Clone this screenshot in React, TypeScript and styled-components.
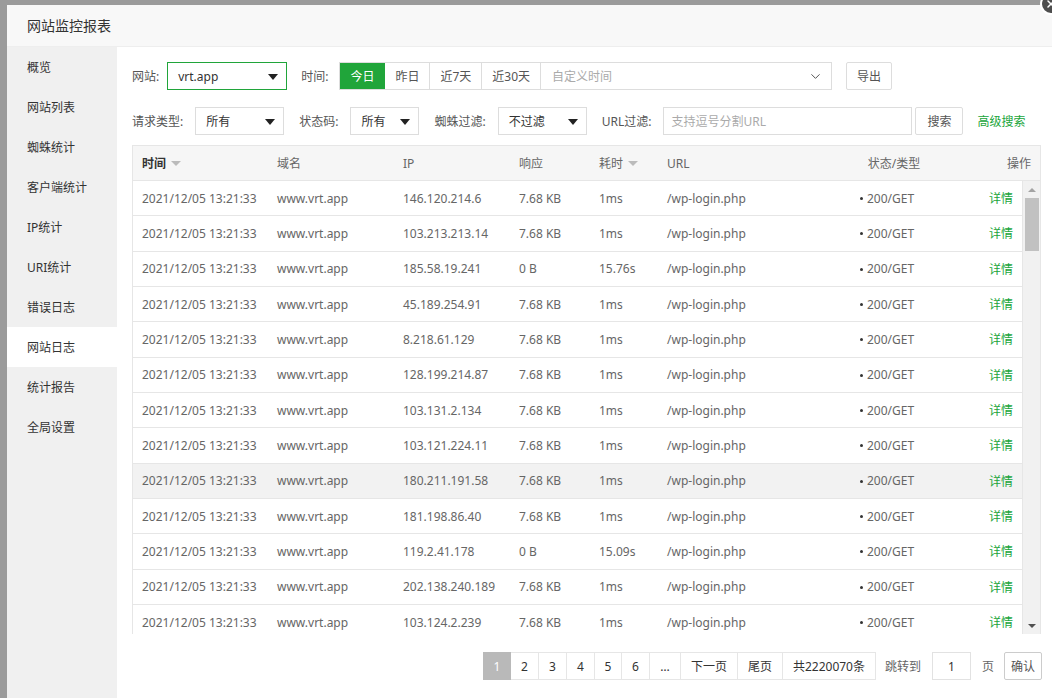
import React from 'react';
import styled, { createGlobalStyle, css } from 'styled-components';
import { ChevronDown, X } from 'lucide-react';

const GlobalStyle = createGlobalStyle`
  * { box-sizing: border-box; }
  html, body { margin: 0; padding: 0; overflow: hidden; background: #9b9b9b; }
  body {
    font-family: "Noto Sans", "Noto Sans CJK SC", sans-serif;
    font-size: 12px;
    color: #666;
  }
`;

const GREEN = '#20a53a';

const Backdrop = styled.div`
  width: 1052px;
  height: 698px;
  padding: 5px 0 0 7px;
  background: #9b9b9b;
  overflow: hidden;
`;

const Modal = styled.div`
  position: relative;
  width: 1049px;
  height: 700px;
  background: #fff;
  display: flex;
  flex-direction: column;
`;

const CloseBtn = styled.div`
  position: absolute;
  top: -12px;
  right: -6px;
  width: 22px;
  height: 22px;
  border-radius: 50%;
  background: #4d4d4d;
  border: 2px solid #fff;
  display: flex;
  align-items: center;
  justify-content: center;
`;

const TitleBar = styled.div`
  height: 42px;
  line-height: 41px;
  padding-left: 20px;
  background: #f8f8f8;
  border-bottom: 1px solid #eee;
  color: #333;
  font-size: 14px;
  flex: none;
`;

const Body = styled.div`
  flex: 1;
  display: flex;
  min-height: 0;
`;

const Sidebar = styled.div`
  width: 110px;
  flex: none;
  background: #f0f0f0;
`;

const NavItem = styled.div<{ $active?: boolean }>`
  height: 40px;
  line-height: 41px;
  padding-left: 20px;
  color: #333;
  font-size: 12px;
  background: ${(p) => (p.$active ? '#fff' : 'transparent')};
`;

const Main = styled.div`
  flex: 1;
  padding: 15px 15px 0 15px;
  display: flex;
  flex-direction: column;
`;

const FilterRow = styled.div<{ $top?: number }>`
  display: flex;
  align-items: center;
  height: 28px;
  margin-top: ${(p) => p.$top ?? 0}px;
`;

const Label = styled.span<{ $gap?: number; $lead?: number }>`
  color: #555;
  margin-left: ${(p) => p.$lead ?? 0}px;
  margin-right: ${(p) => p.$gap ?? 12}px;
  white-space: nowrap;
`;

const SelectBox = styled.div<{ $w: number; $active?: boolean }>`
  position: relative;
  width: ${(p) => p.$w}px;
  height: 28px;
  border: 1px solid ${(p) => (p.$active ? GREEN : '#ddd')};
  padding-left: 10px;
  display: flex;
  align-items: center;
  color: #333;
  font-size: 12px;
  flex: none;
  &::after {
    content: '';
    position: absolute;
    right: 8px;
    top: 11px;
    border-left: 5px solid transparent;
    border-right: 5px solid transparent;
    border-top: 6px solid #222;
  }
`;

const BtnGroup = styled.div`
  display: flex;
  height: 28px;
  border: 1px solid #ddd;
`;

const GroupBtn = styled.div<{ $active?: boolean }>`
  padding: 0 10px;
  display: flex;
  align-items: center;
  border-right: 1px solid #ddd;
  color: #555;
  ${(p) =>
    p.$active &&
    css`
      background: ${GREEN};
      color: #fff;
      border-right-color: ${GREEN};
    `}
`;

const DateInput = styled.div`
  width: 290px;
  display: flex;
  align-items: center;
  justify-content: space-between;
  padding: 0 8px 0 11px;
  color: #aaa;
`;

const Button = styled.div<{ $w: number; $ml: number }>`
  width: ${(p) => p.$w}px;
  height: 28px;
  margin-left: ${(p) => p.$ml}px;
  border: 1px solid #ddd;
  border-radius: 2px;
  background: #fff;
  display: flex;
  align-items: center;
  justify-content: center;
  color: #555;
  flex: none;
`;

const TextInput = styled.div<{ $w: number }>`
  width: ${(p) => p.$w}px;
  height: 28px;
  border: 1px solid #ddd;
  padding-left: 7px;
  display: flex;
  align-items: center;
  color: #aaa;
  flex: none;
`;

const GreenLink = styled.span`
  color: ${GREEN};
  margin-left: 14px;
`;

const Table = styled.div`
  margin-top: 10px;
  border: 1px solid #e6e6e6;
  border-bottom: none;
  display: flex;
  flex-direction: column;
`;

const HEAD_COLS = '135px 126px 116px 80px 68px 162px 148px 1fr';
const BODY_COLS = '135px 126px 116px 80px 68px 162px 134px 1fr';

const HeadRow = styled.div`
  display: grid;
  grid-template-columns: ${HEAD_COLS};
  height: 35px;
  align-items: center;
  background: #f6f6f6;
  border-bottom: 1px solid #e6e6e6;
`;

const Cell = styled.div<{ $align?: 'left' | 'center' | 'right' }>`
  padding: 0 9px;
  text-align: ${(p) => p.$align ?? 'left'};
  white-space: nowrap;
  overflow: hidden;
`;

const HeadCell = styled(Cell)<{ $bold?: boolean }>`
  color: ${(p) => (p.$bold ? '#333' : '#666')};
  font-weight: ${(p) => (p.$bold ? 700 : 400)};
  display: flex;
  align-items: center;
  justify-content: ${(p) => (p.$align === 'right' ? 'flex-end' : p.$align === 'center' ? 'center' : 'flex-start')};
`;

const SortCaret = styled.span`
  display: inline-block;
  margin-left: 5px;
  border-left: 5px solid transparent;
  border-right: 5px solid transparent;
  border-top: 5px solid #bbb;
`;

const BodyWrap = styled.div`
  height: 453px;
  display: flex;
`;

const Rows = styled.div`
  flex: 1;
  overflow: hidden;
  border-right: 1px solid #e6e6e6;
`;

const Row = styled.div<{ $hover?: boolean }>`
  display: grid;
  grid-template-columns: ${BODY_COLS};
  height: 35.33px;
  align-items: center;
  border-bottom: 1px solid #e6e6e6;
  background: ${(p) => (p.$hover ? '#f2f2f2' : '#fff')};
  color: #666;
`;

const Dot = styled.span`
  display: inline-block;
  width: 3px;
  height: 3px;
  border-radius: 50%;
  background: #333;
  margin-right: 4px;
  vertical-align: middle;
  position: relative;
  top: -1px;
`;

const Detail = styled.span`
  color: ${GREEN};
`;

const ScrollTrack = styled.div`
  width: 17px;
  flex: none;
  background: #f1f1f1;
  display: flex;
  flex-direction: column;
  align-items: center;
`;

const Arrow = styled.div<{ $dir: 'up' | 'down'; $color: string }>`
  height: 17px;
  width: 17px;
  display: flex;
  align-items: center;
  justify-content: center;
  flex: none;
  &::before {
    content: '';
    border-left: 4px solid transparent;
    border-right: 4px solid transparent;
    ${(p) =>
      p.$dir === 'up'
        ? css`border-bottom: 4px solid ${p.$color};`
        : css`border-top: 4px solid ${p.$color};`}
  }
`;

const Thumb = styled.div`
  width: 14px;
  height: 53px;
  background: #c1c1c1;
  margin-left: 1px;
`;

const Spacer = styled.div`
  flex: 1;
`;

const Pager = styled.div`
  display: flex;
  justify-content: flex-end;
  align-items: center;
  margin-top: 18px;
  height: 28px;
  margin-right: -1px;
`;

const PageItem = styled.div<{ $active?: boolean; $w: number }>`
  width: ${(p) => p.$w}px;
  height: 28px;
  display: flex;
  align-items: center;
  justify-content: center;
  border: 1px solid #e6e6e6;
  margin-left: -1px;
  color: ${(p) => (p.$active ? '#fff' : '#333')};
  background: ${(p) => (p.$active ? '#b9b9b9' : '#fff')};
  border-color: ${(p) => (p.$active ? '#b9b9b9' : '#e6e6e6')};
  position: relative;
  z-index: ${(p) => (p.$active ? 1 : 0)};
`;

const PagerText = styled.span<{ $ml: number }>`
  margin-left: ${(p) => p.$ml}px;
  color: #666;
`;

const PageInput = styled.div`
  width: 39px;
  height: 28px;
  margin-left: 11px;
  border: 1px solid #e2e2e2;
  display: flex;
  align-items: center;
  justify-content: center;
  color: #333;
`;

const ConfirmBtn = styled.div`
  width: 38px;
  height: 28px;
  margin-left: 10px;
  border: 1px solid #ccc;
  border-radius: 2px;
  display: flex;
  align-items: center;
  justify-content: center;
  color: #555;
`;

const navItems = ['概览', '网站列表', '蜘蛛统计', '客户端统计', 'IP统计', 'URI统计', '错误日志', '网站日志', '统计报告', '全局设置'];

const rows: [string, string, string][] = [
  ['146.120.214.6', '7.68 KB', '1ms'],
  ['103.213.213.14', '7.68 KB', '1ms'],
  ['185.58.19.241', '0 B', '15.76s'],
  ['45.189.254.91', '7.68 KB', '1ms'],
  ['8.218.61.129', '7.68 KB', '1ms'],
  ['128.199.214.87', '7.68 KB', '1ms'],
  ['103.131.2.134', '7.68 KB', '1ms'],
  ['103.121.224.11', '7.68 KB', '1ms'],
  ['180.211.191.58', '7.68 KB', '1ms'],
  ['181.198.86.40', '7.68 KB', '1ms'],
  ['119.2.41.178', '0 B', '15.09s'],
  ['202.138.240.189', '7.68 KB', '1ms'],
  ['103.124.2.239', '7.68 KB', '1ms'],
];

const pages: { t: string; w: number; active?: boolean }[] = [
  { t: '1', w: 28, active: true },
  { t: '2', w: 29 },
  { t: '3', w: 29 },
  { t: '4', w: 29 },
  { t: '5', w: 28 },
  { t: '6', w: 29 },
  { t: '…', w: 32 },
  { t: '下一页', w: 58 },
  { t: '尾页', w: 46 },
  { t: '共2220070条', w: 94 },
];

export default function App() {
  return (
    <Backdrop>
      <GlobalStyle />
      <Modal>
        <CloseBtn>
          <X size={12} color="#fff" strokeWidth={3} />
        </CloseBtn>
        <TitleBar>网站监控报表</TitleBar>
        <Body>
          <Sidebar>
            {navItems.map((n) => (
              <NavItem key={n} $active={n === '网站日志'}>
                {n}
              </NavItem>
            ))}
          </Sidebar>
          <Main>
            <FilterRow>
              <Label $gap={8}>网站:</Label>
              <SelectBox $w={120} $active>
                vrt.app
              </SelectBox>
              <Label $lead={14} $gap={11}>时间:</Label>
              <BtnGroup>
                <GroupBtn $active>今日</GroupBtn>
                <GroupBtn>昨日</GroupBtn>
                <GroupBtn>近7天</GroupBtn>
                <GroupBtn>近30天</GroupBtn>
                <DateInput>
                  <span>自定义时间</span>
                  <ChevronDown size={15} color="#555" strokeWidth={1.6} />
                </DateInput>
              </BtnGroup>
              <Button $w={46} $ml={14}>
                导出
              </Button>
            </FilterRow>
            <FilterRow $top={17}>
              <Label>请求类型:</Label>
              <SelectBox $w={89}>所有</SelectBox>
              <Label $lead={15}>状态码:</Label>
              <SelectBox $w={69}>所有</SelectBox>
              <Label $lead={15}>蜘蛛过滤:</Label>
              <SelectBox $w={89}>不过滤</SelectBox>
              <Label $lead={15} $gap={12}>URL过滤:</Label>
              <TextInput $w={249}>支持逗号分割URL</TextInput>
              <Button $w={48} $ml={3}>
                搜索
              </Button>
              <GreenLink>高级搜索</GreenLink>
            </FilterRow>
            <Table>
              <HeadRow>
                <HeadCell $bold>
                  时间<SortCaret />
                </HeadCell>
                <HeadCell>域名</HeadCell>
                <HeadCell>IP</HeadCell>
                <HeadCell>响应</HeadCell>
                <HeadCell>
                  耗时<SortCaret />
                </HeadCell>
                <HeadCell>URL</HeadCell>
                <HeadCell $align="center">状态/类型</HeadCell>
                <HeadCell $align="right">操作</HeadCell>
              </HeadRow>
              <BodyWrap>
                <Rows>
                  {rows.map(([ip, size, time], i) => (
                    <Row key={i} $hover={i === 8}>
                      <Cell>2021/12/05 13:21:33</Cell>
                      <Cell>www.vrt.app</Cell>
                      <Cell>{ip}</Cell>
                      <Cell>{size}</Cell>
                      <Cell>{time}</Cell>
                      <Cell>/wp-login.php</Cell>
                      <Cell $align="center">
                        <Dot />
                        200/GET
                      </Cell>
                      <Cell $align="right">
                        <Detail>详情</Detail>
                      </Cell>
                    </Row>
                  ))}
                </Rows>
                <ScrollTrack>
                  <Arrow $dir="up" $color="#a3a3a3" />
                  <Thumb />
                  <Spacer />
                  <Arrow $dir="down" $color="#505050" />
                </ScrollTrack>
              </BodyWrap>
            </Table>
            <Pager>
              {pages.map((p) => (
                <PageItem key={p.t} $w={p.w} $active={p.active}>
                  {p.t}
                </PageItem>
              ))}
              <PagerText $ml={9}>跳转到</PagerText>
              <PageInput>1</PageInput>
              <PagerText $ml={11}>页</PagerText>
              <ConfirmBtn>确认</ConfirmBtn>
            </Pager>
          </Main>
        </Body>
      </Modal>
    </Backdrop>
  );
}
